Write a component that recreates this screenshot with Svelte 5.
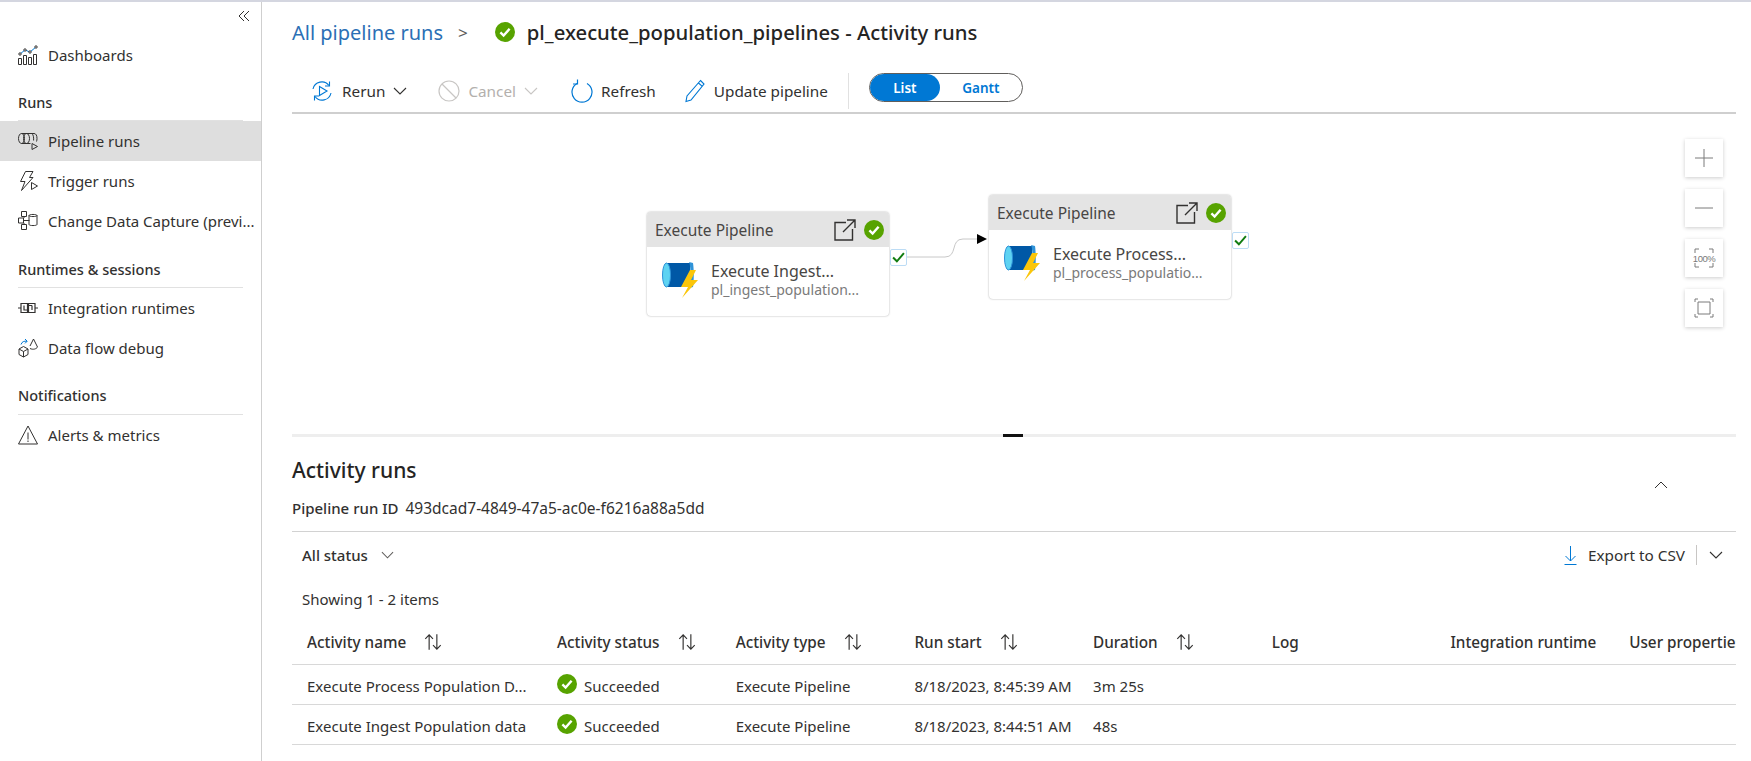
<script lang="ts">
	const columns = [
		{ label: 'Activity name', sort: true },
		{ label: 'Activity status', sort: true },
		{ label: 'Activity type', sort: true },
		{ label: 'Run start', sort: true },
		{ label: 'Duration', sort: true },
		{ label: 'Log', sort: false },
		{ label: 'Integration runtime', sort: false },
		{ label: 'User properties', sort: false }
	];

	const rows = [
		{ name: 'Execute Process Population D...', start: '8/18/2023, 8:45:39 AM', duration: '3m 25s' },
		{ name: 'Execute Ingest Population data', start: '8/18/2023, 8:44:51 AM', duration: '48s' }
	];

	const nodes = [
		{ id: 'ingest', title: 'Execute Ingest...', sub: 'pl_ingest_population...', x: 355, y: 98 },
		{ id: 'process', title: 'Execute Process...', sub: 'pl_process_populatio...', x: 697, y: 81 }
	];
</script>

{#snippet okIcon(size)}
	<svg width={size} height={size} viewBox="0 0 20 20" class="ok">
		<circle cx="10" cy="10" r="10" fill="#57a300" />
		<path d="M5.4 10.4 8.6 13.6 14.6 6.8" fill="none" stroke="#fff" stroke-width="2.4" />
	</svg>
{/snippet}

{#snippet chevron(color, w = 14)}
	<svg width={w} height="8" viewBox="0 0 14 8">
		<path d="M1 1 7 7 13 1" fill="none" stroke={color} stroke-width="1.1" />
	</svg>
{/snippet}

{#snippet sortIcon()}
	<svg width="18" height="18" viewBox="0 0 14 14" class="sort">
		<path d="M4 13V1.5M1 4.5 4 1.5 7 4.5M10 1V12.5M7 9.500 10 12.500 13 9.500" fill="none" stroke="#323130" stroke-width="0.9" />
	</svg>
{/snippet}

<div class="page">
	<aside class="sidebar">
		<div class="collapse">
			<svg width="12" height="12" viewBox="0 0 12 12">
				<path d="M6 1 1 6 6 11M11 1 6 6 11 11" fill="none" stroke="#323130" stroke-width="1" />
			</svg>
		</div>
		<a class="nav first">
			<svg width="20" height="20" viewBox="0 0 20 20" fill="none" stroke="#323130" stroke-width="1">
				<path d="M.5 13.500h3v6h-3zM5.500 10.500h3v9h-3zM10.500 12.500h3v7h-3zM15.500 9.500h3v10h-3z" />
				<path d="M2 9 7 5 12 7 18 2" stroke="#0078d4" />
				<circle cx="2" cy="9" r="1.200" fill="#fff" /><circle cx="7" cy="5" r="1.200" fill="#fff" /><circle cx="12" cy="7" r="1.200" fill="#fff" /><circle cx="18" cy="2" r="1.200" fill="#fff" />
			</svg>
			<span>Dashboards</span>
		</a>

		<h3 class="group one">Runs</h3>
		<a class="nav active">
			<svg width="20" height="20" viewBox="0 0 20 20" fill="none" stroke="#323130" stroke-width="1">
				<ellipse cx="3.500" cy="7.500" rx="3" ry="5" />
				<ellipse cx="8.500" cy="7.500" rx="3" ry="5" />
				<path d="M3.500 2.500h12.500c2 0 3 2 3 5 0 1.200-.2 2.200-.5 3M3.500 12.500h9" />
				<path d="M14 2.500c1.300 1.500 1.800 3.500 1.600 7" />
				<path d="M14 12.500l5.500 3-5.500 3z" />
			</svg>
			<span>Pipeline runs</span>
		</a>
		<a class="nav">
			<svg width="20" height="20" viewBox="0 0 20 20" fill="none" stroke="#323130" stroke-width="1">
				<path d="M7.500.5h7.500l-3.500 6h3.500L3.500 19.500l3.500-9H2.500z" />
				<path d="M13.500 11.500l6 3.500-6 3.500z" fill="#fff" />
			</svg>
			<span>Trigger runs</span>
		</a>
		<a class="nav">
			<svg width="20" height="20" viewBox="0 0 20 20" fill="none" stroke="#323130" stroke-width="1">
				<path d="M3.500 .5h5v5h-5zM.5 7h5v5h-5zM3.500 13.500h5v5h-5zM5.500 9.500h6M6 5.500V7M6 12v1.500" />
				<path d="M11 4.500c0-1.400 8-1.400 8 0v9c0 1.400-8 1.400-8 0zM11 4.500c0 1.400 8 1.400 8 0" />
			</svg>
			<span class="clip">Change Data Capture (previ...</span>
		</a>

		<h3 class="group two">Runtimes &amp; sessions</h3>
		<a class="nav">
			<svg width="20" height="20" viewBox="0 0 20 20" fill="none" stroke="#323130" stroke-width="1.200">
				<path d="M0 10h3M17 10h3M3 5.500h6.500v9H3zM10.500 5.500H17v9h-6.500z" />
				<path d="M6 7.500v4.500h3.500M14 7.500h-3.500v0M14 7.500V12" />
			</svg>
			<span>Integration runtimes</span>
		</a>
		<a class="nav">
			<svg width="20" height="20" viewBox="0 0 20 20" fill="none" stroke="#323130" stroke-width="1">
				<path d="M1 11l4.500-2.500L10 11v5.500l-4.500 2.500L1 16.500zM1 11l4.500 2.500L10 11M5.500 13.500V19" />
				<path d="M12 10.500c3 1.500 6.500.5 7.500-1.500L15.500 1l-3.500 7" />
				<path d="M3 6.500c1-3 3-3.500 6-3.300M7 1l2.200 2.200L7 5.400" stroke="#0078d4" />
			</svg>
			<span>Data flow debug</span>
		</a>

		<h3 class="group three">Notifications</h3>
		<a class="nav">
			<svg width="20" height="20" viewBox="0 0 20 20" fill="none" stroke="#323130" stroke-width="1">
				<path d="M10 1 19.500 19H.5z" />
				<path d="M10 7.500v7M10 15.500v1.500" />
			</svg>
			<span>Alerts &amp; metrics</span>
		</a>
	</aside>

	<main class="main">
		<header class="crumbs">
			<a class="crumb-link">All pipeline runs</a>
			<span class="crumb-sep">&gt;</span>
			{@render okIcon(20)}
			<h1>pl_execute_population_pipelines - Activity runs</h1>
		</header>

		<div class="toolbar">
			<button class="tool">
				<svg width="24" height="24" viewBox="0 0 24 24" fill="none" stroke="#0078d4" stroke-width="1.100">
					<path d="M3 10A9 9 0 0 1 19 6.500M21 14A9 9 0 0 1 5 17.500" />
					<path d="M19.500 2.500v4.500H15M4.500 21.500V17H9" />
					<path d="M9.500 7.500 17 12l-7.500 4.500z" />
				</svg>
				Rerun
				{@render chevron('#323130')}
			</button>
			<button class="tool disabled cancel">
				<svg width="22" height="22" viewBox="0 0 22 22" fill="none" stroke="#c8c6c4" stroke-width="1.200">
					<circle cx="11" cy="11" r="10" /><path d="M4 4l14 14" />
				</svg>
				Cancel
				{@render chevron('#c8c6c4')}
			</button>
			<button class="tool refresh">
				<svg width="22" height="24" viewBox="0 0 22 24" fill="none" stroke="#0078d4" stroke-width="1.200">
					<path d="M6 4.500a10 10 0 1 0 10 0" />
					<path d="M6.500 .5V5H2" />
				</svg>
				Refresh
			</button>
			<button class="tool update">
				<svg width="22" height="24" viewBox="0 0 22 24" fill="none" stroke="#0078d4" stroke-width="1.100">
					<path d="M16.500 1.500 20 5 7 21l-5 1.500L3 17zM14.500 4l3.500 3.200" />
				</svg>
				Update pipeline
			</button>
			<span class="tool-sep"></span>
			<div class="switch">
				<span class="opt on">List</span>
				<span class="opt">Gantt</span>
			</div>
		</div>

		<section class="canvas">
			{#each nodes as node (node.id)}
				<div class="node" style="left:{node.x}px;top:{node.y}px">
					<div class="node-head">
						<span>Execute Pipeline</span>
						<svg width="22" height="22" viewBox="0 0 22 22" fill="none" stroke="#323130" stroke-width="1.400">
							<path d="M12 3.500H1v17.500h17.500V10M9 13 21 1M13 1h8v8" />
						</svg>
						{@render okIcon(20)}
					</div>
					<div class="node-body">
						<svg width="36" height="36" viewBox="0 0 36 36">
							<path d="M4 1h24v24H4z" fill="#0058a6" />
							<path d="M27 0c2 3 2 23 0 26l4-1c1-6 1-18 0-24z" fill="#2f93d8" />
							<ellipse cx="4.500" cy="13" rx="4" ry="12" fill="#5ed3f2" stroke="#2f93d8" />
							<path d="M28 8 19 25h7l-6 11L36 18h-7l5-10z" fill="#fbc60a" />
						</svg>
						<div class="node-text">
							<div class="node-title">{node.title}</div>
							<div class="node-sub">{node.sub}</div>
						</div>
					</div>
					<span class="port">
						<svg width="13" height="11" viewBox="0 0 12 10"><path d="M1 5 4.500 8.500 11 1" fill="none" stroke="#107c10" stroke-width="1.800" /></svg>
					</span>
				</div>
			{/each}

			<svg class="edge" width="110" height="30" viewBox="0 0 110 30">
				<path d="M17 28H55C68 28 60 10 73 10H88" fill="none" stroke="#c8c8c8" stroke-width="1" />
				<path d="M87 5l10 5-10 5z" fill="#000" />
			</svg>

			<div class="zoom-tools">
				<button class="zoom-btn">
					<svg width="20" height="20" viewBox="0 0 20 20"><path d="M1 10h18M10 1v18" stroke="#7a7a7a" stroke-width="1" /></svg>
				</button>
				<button class="zoom-btn">
					<svg width="20" height="20" viewBox="0 0 20 20"><path d="M1 10h18" stroke="#7a7a7a" stroke-width="1" /></svg>
				</button>
				<button class="zoom-btn">
					<svg width="20" height="20" viewBox="0 0 20 20" fill="none" stroke="#7a7a7a"><path d="M1 5V1h4M15 1h4v4M1 15v4h4M19 15v4h-4" /></svg>
					<span class="pct">100%</span>
				</button>
				<button class="zoom-btn">
					<svg width="20" height="20" viewBox="0 0 20 20" fill="none" stroke="#7a7a7a"><path d="M1 4V1h3M16 1h3v3M1 16v3h3M19 16v3h-3M4 4h12v12H4z" /></svg>
				</button>
			</div>
		</section>

		<div class="split"><span class="grip"></span></div>

		<section class="runs">
			<div class="runs-head">
				<h2>Activity runs</h2>
				<svg width="16" height="8" viewBox="0 0 14 8"><path d="M1 7 7 1 13 7" fill="none" stroke="#323130" stroke-width="1" /></svg>
			</div>
			<div class="run-id"><b>Pipeline run ID</b><span>493dcad7-4849-47a5-ac0e-f6216a88a5dd</span></div>

			<div class="filters">
				<span class="status-filter">All status {@render chevron('#605e5c', 13)}</span>
				<div class="export">
					<svg width="15" height="20" viewBox="0 0 14 20" fill="none" stroke="#0078d4" stroke-width="1">
						<path d="M7 1v15M2 11l5 5 5-5M1 19.500h12" />
					</svg>
					<span>Export to CSV</span>
					<i></i>
					{@render chevron('#323130')}
				</div>
			</div>
			<p class="count">Showing 1 - 2 items</p>

			<div class="table">
				<div class="tr th">
					{#each columns as col}
						<div class="cell">
							<span>{col.label}</span>
							{#if col.sort}{@render sortIcon()}{/if}
						</div>
					{/each}
				</div>
				{#each rows as row}
					<div class="tr">
						<div class="cell"><span>{row.name}</span></div>
						<div class="cell status">{@render okIcon(20)}<span>Succeeded</span></div>
						<div class="cell">Execute Pipeline</div>
						<div class="cell">{row.start}</div>
						<div class="cell">{row.duration}</div>
						<div class="cell"></div>
						<div class="cell"></div>
						<div class="cell"></div>
					</div>
				{/each}
			</div>
		</section>
	</main>
</div>

<style>
	:global(body) {
		margin: 0;
		background: #fff;
		font-family: 'Noto Sans', 'Open Sans', sans-serif;
		color: #323130;
		overflow: hidden;
	}

	.page {
		display: flex;
		height: 761px;
		border-top: 2px solid #d4d6e0;
		box-sizing: border-box;
		font-size: 15px;
	}

	.sidebar {
		width: 262px;
		flex: none;
		box-sizing: border-box;
		border-right: 1px solid #cfcfcf;
		padding-top: 8px;
	}

	.collapse {
		display: flex;
		justify-content: flex-end;
		padding-right: 11px;
		height: 14px;
	}

	.nav {
		display: flex;
		align-items: center;
		gap: 10px;
		height: 40px;
		padding-left: 18px;
		white-space: nowrap;
		overflow: hidden;
	}

	.nav svg {
		flex: none;
	}

	.nav.first {
		margin-top: 11px;
	}

	.nav.active {
		background: #dedede;
	}

	.clip {
		overflow: hidden;
	}

	.group {
		margin: 17px 18px 0 18px;
		padding-bottom: 6px;
		height: 19px;
		line-height: 19px;
		font-size: 14.500px;
		font-weight: 500;
		border-bottom: 1px solid #e1e1e1;
	}

	.group.one {
		margin-top: 18px;
		padding-bottom: 8px;
	}

	.group.two {
		margin-top: 19px;
		padding-bottom: 8px;
	}

	.group.three {
		margin-top: 18px;
		padding-bottom: 9px;
	}

	.main {
		flex: 1;
		min-width: 0;
		margin: 0 15px 0 30px;
		display: flex;
		flex-direction: column;
	}

	.crumbs {
		display: flex;
		align-items: center;
		height: 60px;
	}

	.crumb-link {
		font-size: 20px;
		color: #2b6fb5;
	}

	.crumb-sep {
		margin: 0 27px 0 15px;
		font-size: 17px;
		color: #605e5c;
	}

	h1 {
		margin: 0 0 0 12px;
		font-size: 20.300px;
		font-weight: 500;
		color: #252423;
	}

	.toolbar {
		display: flex;
		align-items: center;
		height: 42px;
		padding: 8px 0 0 18px;
		border-bottom: 2px solid #cfcfcf;
	}

	.tool {
		display: flex;
		align-items: center;
		gap: 8px;
		padding: 0;
		background: none;
		border: none;
		font: inherit;
		font-size: 15.300px;
		color: #323130;
	}

	.tool.disabled {
		color: #b3b0ad;
	}

	.cancel {
		margin-left: 31px;
	}

	.refresh {
		margin-left: 33px;
	}

	.update {
		margin-left: 28px;
	}

	.tool-sep {
		width: 1px;
		height: 36px;
		background: #e1e1e1;
		margin: 0 20px;
	}

	.switch {
		display: flex;
		width: 154px;
		height: 29px;
		margin-top: -7px;
		border: 1px solid #605e5c;
		border-radius: 15px;
		overflow: hidden;
		box-sizing: border-box;
	}

	.opt {
		flex: 1;
		display: flex;
		align-items: center;
		justify-content: center;
		font-size: 13.500px;
		font-weight: 600;
		color: #0078d4;
	}

	.opt.on {
		background: #0078d4;
		color: #fff;
		border-radius: 15px;
		flex: 0 0 70px;
	}

	.canvas {
		position: relative;
		height: 320px;
	}

	.node {
		position: absolute;
		width: 242px;
		height: 104px;
		background: #fff;
		border-radius: 4px;
		box-shadow: 0 0 2px rgba(0, 0, 0, 0.35);
	}

	.node-head {
		display: flex;
		align-items: center;
		height: 35px;
		background: #e4e4e4;
		border-radius: 4px 4px 0 0;
		padding: 0 5px 0 8px;
		color: #484644;
		font-size: 15.500px;
	}

	.node-head span {
		flex: 1;
	}

	.node-head svg:first-of-type {
		margin-right: 8px;
	}

	.node-body {
		display: flex;
		padding: 15px 0 0 15px;
	}

	.node-text {
		margin-left: 13px;
		margin-top: -1px;
	}

	.node-title {
		font-size: 16px;
		color: #484644;
		line-height: 20px;
	}

	.node-sub {
		margin-top: 2px;
		font-size: 14px;
		color: #7a7a7a;
		line-height: 14px;
	}

	.port {
		position: absolute;
		right: -18px;
		top: 37px;
		width: 17px;
		height: 17px;
		display: flex;
		align-items: center;
		justify-content: center;
		background: #fff;
		border: 1px solid #bcdcf5;
		border-radius: 2px;
		box-sizing: border-box;
	}

	.edge {
		position: absolute;
		left: 598px;
		top: 115px;
	}

	.zoom-tools {
		position: absolute;
		right: 13px;
		top: 25px;
		display: flex;
		flex-direction: column;
		gap: 12px;
	}

	.zoom-btn {
		position: relative;
		width: 38px;
		height: 38px;
		display: flex;
		align-items: center;
		justify-content: center;
		padding: 0;
		border: none;
		background: #fff;
		box-shadow: 0 1px 4px rgba(0, 0, 0, 0.2);
	}

	.pct {
		position: absolute;
		font-size: 9.500px;
		letter-spacing: -0.5px;
		color: #7a7a7a;
	}

	.split {
		position: relative;
		height: 3px;
		background: #eeeeee;
	}

	.grip {
		position: absolute;
		left: 711px;
		top: 0;
		width: 20px;
		height: 3px;
		background: #111;
	}

	.runs-head {
		display: flex;
		align-items: center;
		justify-content: space-between;
		height: 54px;
		padding: 6px 67px 0 0;
	}

	.runs-head svg {
		margin-top: 30px;
	}

	h2 {
		margin: 0;
		font-size: 21px;
		font-weight: 500;
		color: #252423;
	}

	.run-id {
		display: flex;
		gap: 7px;
		align-items: center;
		line-height: 20px;
		padding: 1px 0 13px;
		border-bottom: 1px solid #d2d2d2;
		font-size: 15px;
	}

	.run-id b {
		font-weight: 500;
	}

	.run-id span {
		font-size: 15.500px;
	}

	.filters {
		display: flex;
		justify-content: space-between;
		align-items: center;
		height: 46px;
		padding: 0 0 0 10px;
	}

	.status-filter {
		display: flex;
		align-items: center;
		gap: 13px;
		font-weight: 500;
		font-size: 15px;
	}

	.export {
		display: flex;
		align-items: center;
		gap: 10px;
		padding-right: 13px;
		font-size: 15.300px;
	}

	.export i {
		width: 1px;
		height: 20px;
		background: #c8c6c4;
		margin-left: 1px;
		margin-right: 2px;
	}

	.count {
		margin: 0;
		padding-left: 10px;
		height: 42px;
		line-height: 42px;
		font-size: 15px;
	}

	.table {
		overflow: hidden;
	}

	.tr {
		display: grid;
		grid-template-columns: 250px repeat(7, 178.700px);
		height: 37px;
		padding: 2px 0 0 15px;
		align-items: center;
		border-bottom: 1px solid #d8d8d8;
		width: max-content;
		min-width: 100%;
		font-size: 15px;
	}

	.tr.th {
		height: 44px;
		padding-top: 0;
		font-weight: 500;
		font-size: 15.300px;
	}

	.cell {
		display: flex;
		align-items: center;
		gap: 18px;
		white-space: nowrap;
		min-width: 0;
	}

	.cell.status {
		gap: 7px;
	}

	.cell.status .ok {
		margin-top: -4px;
	}

	.ok {
		flex: none;
	}
</style>
